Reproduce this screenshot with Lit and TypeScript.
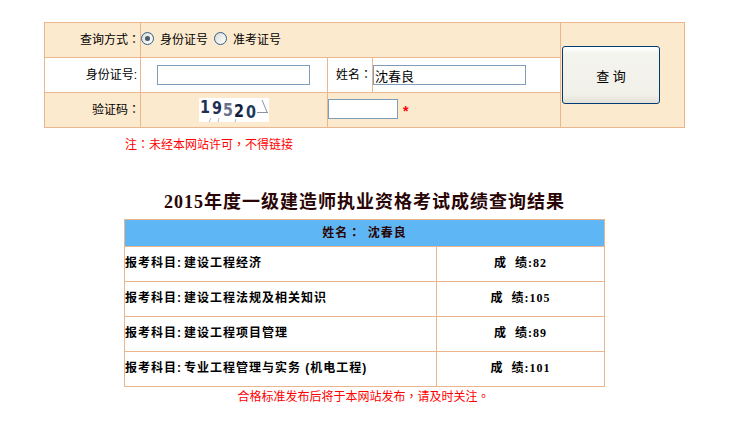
import { LitElement, html, css, svg, unsafeCSS } from 'lit';
import { customElement } from 'lit/decorators.js';

const CJK = unsafeCSS(`"Liberation Sans", "Noto Sans CJK SC", sans-serif`);
const SERIF = unsafeCSS(`"Liberation Serif", "Noto Sans CJK SC", serif`);

const results = [
  { subject: '建设工程经济', score: '82' },
  { subject: '建设工程法规及相关知识', score: '105' },
  { subject: '建设工程项目管理', score: '89' },
  { subject: '专业工程管理与实务 (机电工程)', score: '101' },
];

@customElement('app-root')
export class AppRoot extends LitElement {
  static styles = css`
    :host {
      display: block;
      width: 732px;
      height: 422px;
      overflow: hidden;
      background: #fff;
      font-family: ${CJK};
      font-size: 12px;
      color: #000;
    }
    .page {
      padding: 22px 0 0 44px;
    }
    table {
      border-collapse: collapse;
      table-layout: fixed;
    }
    td {
      padding: 0;
      border: 1px solid #ebb68d;
      line-height: 14px;
    }
    /* centred full-width punctuation, like the original font */
    .punct {
      font-family: "Noto Sans CJK TC", sans-serif;
      line-height: 0;
    }
    .query {
      width: 641px;
    }
    .query tr {
      height: 35px;
    }
    .tinted {
      background: #fceacf;
    }
    .label {
      text-align: right;
    }
    .label.half {
      padding-right: 3px;
    }
    .name-label {
      padding-left: 8px;
      white-space: nowrap;
    }
    .radios {
      display: flex;
      align-items: center;
    }
    .radio {
      width: 13px;
      height: 13px;
      box-sizing: border-box;
      border-radius: 50%;
      border: 1px solid #2f5d8a;
      background: linear-gradient(135deg, #dcdcd6, #fff);
      margin: 0 6px 4px 0;
    }
    .radio.on::after {
      content: '';
      display: block;
      width: 5px;
      height: 5px;
      margin: 3px;
      border-radius: 50%;
      background: #4a5a6a;
    }
    .radio-text {
      margin-right: 6px;
    }
    input {
      box-sizing: border-box;
      height: 20px;
      border: 1px solid #7f9db9;
      padding: 0 0 0 1px;
      margin: 0;
      background: #fff;
      font-family: ${CJK};
      font-size: 13px;
      vertical-align: middle;
      outline: none;
    }
    .id-input {
      width: 153px;
      margin-left: 16px;
    }
    .name-input {
      width: 153px;
    }
    .code-input {
      width: 70px;
      margin-bottom: 2px;
    }
    .star {
      color: #f00;
      margin-left: 5px;
      font-size: 14px;
      font-weight: bold;
      vertical-align: -3px;
    }
    .captcha {
      display: block;
      margin-left: 58px;
    }
    .submit-cell {
      vertical-align: top;
      padding: 23px 0 0 1px;
    }
    .submit {
      display: block;
      box-sizing: border-box;
      width: 98px;
      height: 58px;
      border: 1px solid #003c74;
      border-radius: 3px;
      background: linear-gradient(#fff 0%, #f4f4ee 12%, #f1f0e9 85%, #e3e1d6 100%);
      font-family: ${CJK};
      font-size: 13px;
      padding: 0;
      color: #000;
    }
    .note {
      margin: 9px 0 0 81px;
      color: #f00;
      line-height: 16px;
    }
    .result-wrap {
      margin-left: 80px;
      width: 481px;
    }
    h1 {
      margin: 37px 0 0;
      width: 481px;
      text-align: center;
      font-family: ${SERIF};
      font-size: 18px;
      font-weight: bold;
      letter-spacing: 1px;
      line-height: 25px;
      color: #2a0505;
      white-space: nowrap;
    }
    .result {
      width: 481px;
      margin-top: 4px;
      font-weight: bold;
      letter-spacing: 1px;
    }
    .result tr {
      height: 35px;
    }
    .result td {
      padding-bottom: 2px;
    }
    .result .head {
      height: 27px;
      background: #5fb6f4;
      text-align: center;
      color: #2a0505;
    }
    .result .head td {
      padding-bottom: 0;
    }
    .head-name {
      margin-left: 2px;
    }
    .colon {
      margin-right: 2px;
    }
    .result .score {
      text-align: center;
      font-family: ${SERIF};
    }
    .foot {
      width: 481px;
      margin: 2px 0 0 -1px;
      text-align: center;
      color: #f00;
      line-height: 16px;
    }
  `;

  private captcha() {
    const digits = [
      ['1', 1, 15, '#1e2f55'],
      ['9', 13, 16, '#1e2f55'],
      ['5', 24, 18, '#68708c'],
      ['2', 35, 19, '#101c3c'],
      ['0', 47, 20, '#1e3a5c'],
    ] as const;
    return html`<svg class="captcha" width="70" height="24" viewBox="0 0 70 24">
      <rect width="70" height="24" fill="#fff"></rect>
      ${digits.map(
        ([d, x, y, fill]) =>
          svg`<text x=${x} y=${y} fill=${fill} font-size="17" font-weight="bold" font-family="DejaVu Sans, sans-serif" textLength="10" lengthAdjust="spacingAndGlyphs">${d}</text>`,
      )}
      <path d="M58 14.5h11M63 2l5 12" stroke="#8a93a8" fill="none"></path>
      <path d="M10 24l2-4M19 24l1-4M36 24l1-3" stroke="#b4b8c4" fill="none"></path>
    </svg>`;
  }

  render() {
    return html`<div class="page">
      <table class="query">
        <colgroup>
          <col style="width:96px" /><col style="width:187px" /><col style="width:45px" /><col style="width:188px" /><col />
        </colgroup>
        <tr class="tinted">
          <td class="label">查询方式<span class="punct">：</span></td>
          <td colspan="3">
            <div class="radios">
              <span class="radio on"></span><span class="radio-text">身份证号</span><span class="radio"></span><span>准考证号</span>
            </div>
          </td>
          <td class="submit-cell" rowspan="3"><button class="submit">查 询</button></td>
        </tr>
        <tr>
          <td class="label half">身份证号:</td>
          <td><input class="id-input" /></td>
          <td class="name-label">姓名<span class="punct">：</span></td>
          <td><input class="name-input" .value=${'沈春良'} /></td>
        </tr>
        <tr class="tinted">
          <td class="label">验证码<span class="punct">：</span></td>
          <td>${this.captcha()}</td>
          <td colspan="2"><input class="code-input" /><span class="star">*</span></td>
        </tr>
      </table>
      <div class="note">注<span class="punct">：</span>未经本网站许可<span class="punct">，</span>不得链接</div>
      <div class="result-wrap">
        <h1>2015年度一级建造师执业资格考试成绩查询结果</h1>
        <table class="result">
          <colgroup><col style="width:312px" /><col /></colgroup>
          <tr class="head"><td colspan="2">姓名<span class="punct">：</span> <span class="head-name">沈春良</span></td></tr>
          ${results.map(
            (r) => html`<tr>
              <td>报考科目<span class="colon">:</span>${r.subject}</td>
              <td class="score">成&nbsp;&nbsp;绩:${r.score}</td>
            </tr>`,
          )}
        </table>
        <div class="foot">合格标准发布后将于本网站发布<span class="punct">，</span>请及时关注<span class="punct">。</span></div>
      </div>
    </div>`;
  }
}
